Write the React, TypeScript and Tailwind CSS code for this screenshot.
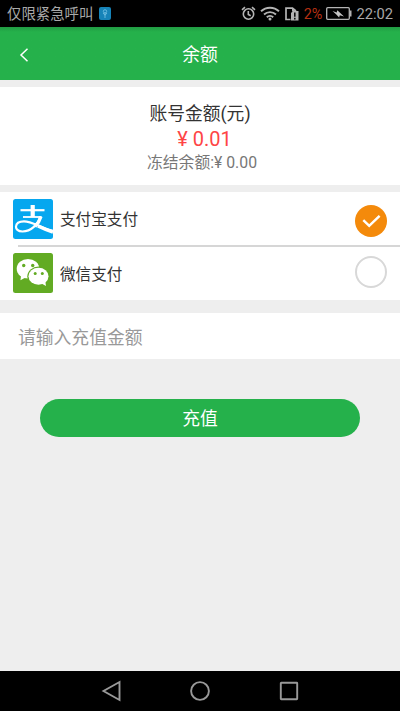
import { useState } from 'react'

type Method = 'alipay' | 'wechat'

const METHODS: { id: Method; label: string }[] = [
  { id: 'alipay', label: '支付宝支付' },
  { id: 'wechat', label: '微信支付' },
]

function StatusBar() {
  return (
    <div className="flex h-[27px] shrink-0 items-center bg-black px-[7px] text-[14.4px] leading-[27px] text-[#a9a9a9]">
      <span className="pt-0.5">仅限紧急呼叫</span>
      <svg className="ml-1.5" width="12" height="13" viewBox="0 0 12 13">
        <rect width="12" height="13" rx="2" fill="#1683b8" />
        <g fill="none" stroke="#6dbce0" strokeWidth="0.9">
          <circle cx="6" cy="4.4" r="1.7" />
          <path d="M6 5v6M4 6l2 2.2L8 6" />
        </g>
      </svg>
      <svg className="ml-auto" width="15" height="16" viewBox="0 0 15 16" fill="none" stroke="#b4b4b4" strokeWidth="1.6">
        <circle cx="7.5" cy="8" r="5.2" />
        <path d="M1 3.8l3-2.6M14 3.8l-3-2.6M7.3 5v3.4l2.4 1.3" />
      </svg>
      <svg className="ml-1" width="20" height="15" viewBox="0 0 20 15" fill="none" stroke="#b4b4b4" strokeWidth="1.9">
        <path d="M1 5.3c5-4.8 13-4.8 18 0M4 8.5c3.4-3.2 8.6-3.2 12 0M6.8 11.3c1.8-1.7 4.6-1.7 6.4 0" />
        <circle cx="10" cy="13" r="1.5" fill="#b4b4b4" stroke="none" />
      </svg>
      <svg className="ml-[5px]" width="14" height="14" viewBox="0 0 14 14">
        <path d="M5.5 12.5H1V1.2h6.500L11 4" fill="none" stroke="#b4b4b4" strokeWidth="1.7" />
        <path d="M7 1l4 3.5H7z" fill="#b4b4b4" />
        <path d="M6 6l2-2h5.5v9.5H6z" fill="#b4b4b4" />
        <path d="M9.800 5.500v4.300M9.800 10.800v1.700" stroke="#111" strokeWidth="1.6" />
      </svg>
      <span className="ml-[5px] pt-px text-[#b52f12]">2%</span>
      <svg className="ml-[4px]" width="26" height="13" viewBox="0 0 26 13">
        <rect x="0.7" y="0.7" width="22.6" height="11.6" rx="1" fill="none" stroke="#b4b4b4" strokeWidth="1.3" />
        <rect x="24" y="3.5" width="1.5" height="6" fill="#b4b4b4" />
        <path d="M6.500 4l4.200 1.400.600-2.200 2.700 2.500 4 3.800-4.200-1.300-.700 2.400-2.800-3.100z" fill="#c4c4c4" />
      </svg>
      <span className="ml-[4px] pt-px text-[14.7px]">22:02</span>
    </div>
  )
}

function AlipayLogo() {
  return (
    <svg width="40" height="40" viewBox="0 0 40 40">
      <rect width="40" height="40" rx="2.5" fill="#06a7ef" />
      <g fill="none" stroke="#fff">
        <path d="M7.5 11.2H31.5" strokeWidth="2.2" />
        <path d="M19.7 6v12" strokeWidth="4.2" />
        <path d="M10 18h18.5" strokeWidth="1.8" />
        <path
          d="M27.5 17.5C24.5 26 18 32.5 9.5 32.5C4.8 32.5 2.8 30 3 27.5C3.3 24 6.5 22.3 11 22.3C19 22.3 27 28.5 40 32"
          strokeWidth="2.2"
        />
        <path d="M28 17.5C27 21 25 24.5 22 27.5" strokeWidth="3.2" />
        <path d="M25 27C29 29 34 31.2 40 33" strokeWidth="3.6" />
      </g>
    </svg>
  )
}

function WechatLogo() {
  return (
    <svg width="40" height="40" viewBox="0 0 40 40">
      <rect width="40" height="40" rx="2.5" fill="#62ab23" />
      <path d="M8 22.500L7.500 27.200l5-2.700z" fill="#fff" />
      <ellipse cx="15" cy="15.7" rx="11.3" ry="9.8" fill="#fff" />
      <ellipse cx="25.5" cy="23.3" rx="11.2" ry="9.7" fill="#62ab23" />
      <path d="M28.500 30.500l4.500 2.500-.8-5z" fill="#fff" />
      <ellipse cx="25.5" cy="23.3" rx="10" ry="8.5" fill="#fff" />
      <g fill="#62ab23">
        <circle cx="10.7" cy="12.5" r="1.7" />
        <circle cx="19.7" cy="12.5" r="1.7" />
        <circle cx="22.2" cy="20.4" r="1.5" />
        <circle cx="29.3" cy="20.4" r="1.5" />
      </g>
    </svg>
  )
}

function Radio({ checked }: { checked: boolean }) {
  if (!checked) {
    return <span className="-mt-[3px] size-8 rounded-full border-2 border-[#d8d8d8]" />
  }
  return (
    <svg className="mt-[5px]" width="32" height="32" viewBox="0 0 32 32">
      <circle cx="16" cy="16" r="16" fill="#f48a0b" />
      <path d="M8.3 15.2l5.9 5.600L24.6 10.8" fill="none" stroke="#fff" strokeWidth="2.5" />
    </svg>
  )
}

export default function App() {
  const [method, setMethod] = useState<Method>('alipay')

  return (
    <div className="flex h-[711px] w-[400px] flex-col overflow-hidden bg-[#eee] font-[Roboto,'Noto_Sans_CJK_SC',sans-serif]">
      <StatusBar />

      {/* Title bar */}
      <header className="grid h-[53px] shrink-0 grid-cols-3 items-center bg-[#25b14b] bg-linear-to-b from-[#219c43] to-[#25b14b] to-[5px]">
        <button className="ml-[19px] mt-[3px] w-fit" aria-label="返回">
          <svg width="10" height="14" viewBox="0 0 10 14" fill="none" stroke="#fff" strokeWidth="1.5">
            <path d="M8.5 0.7L2 7l6.5 6.3" />
          </svg>
        </button>
        <h1 className="pt-0.5 text-center text-[17.8px] leading-6 text-white">余额</h1>
      </header>

      {/* Balance */}
      <section className="mt-[7px] flex h-[98px] shrink-0 flex-col items-center bg-white pt-[15px]">
        <p className="text-[17.8px] leading-6 text-[#333]">账号金额(元)</p>
        <p className="pl-[9px] text-xl leading-[26px] text-[#fe4545]">¥ 0.01</p>
        <p className="pl-1 text-[15.8px] leading-[22px] text-[#777]">冻结余额:¥ 0.00</p>
      </section>

      {/* Payment methods */}
      <section className="mt-[7px] flex h-[108px] shrink-0 flex-col bg-white">
        {METHODS.map((m, i) => (
          <div key={m.id} className="flex flex-col">
            {i > 0 && <div className="ml-[18px] h-[1.5px] bg-[#d6d6d6]" />}
            <button
              className="flex h-[53px] items-center px-[13px]"
              onClick={() => setMethod(m.id)}
            >
              {m.id === 'alipay' ? <AlipayLogo /> : <WechatLogo />}
              <span className="ml-[7px] mr-auto pt-[3px] text-[15.6px] leading-6 text-[#333]">{m.label}</span>
              <Radio checked={method === m.id} />
            </button>
          </div>
        ))}
      </section>

      <input
        className="mt-[13px] h-[46px] shrink-0 bg-white pl-[18px] pt-[3px] text-[17.8px] outline-none placeholder:text-[#999]"
        placeholder="请输入充值金额"
      />

      <button className="mx-10 mt-10 h-[38px] shrink-0 rounded-full bg-[#25b14b] pt-[3px] text-[17.8px] text-white">
        充值
      </button>

      {/* System navigation */}
      <nav className="mt-auto flex h-10 shrink-0 items-center justify-center gap-[69px] bg-black">
        <svg width="20" height="22" viewBox="0 0 20 22" fill="none" stroke="#999" strokeWidth="1.9">
          <path d="M18.5 2v18L2.5 11z" />
        </svg>
        <svg width="20" height="20" viewBox="0 0 20 20" fill="none" stroke="#999" strokeWidth="1.9">
          <circle cx="10" cy="10" r="8.9" />
        </svg>
        <svg width="20" height="20" viewBox="0 0 20 20" fill="none" stroke="#999" strokeWidth="1.9">
          <rect x="1.8" y="1.8" width="16.4" height="16.4" rx="0.5" />
        </svg>
      </nav>
    </div>
  )
}
